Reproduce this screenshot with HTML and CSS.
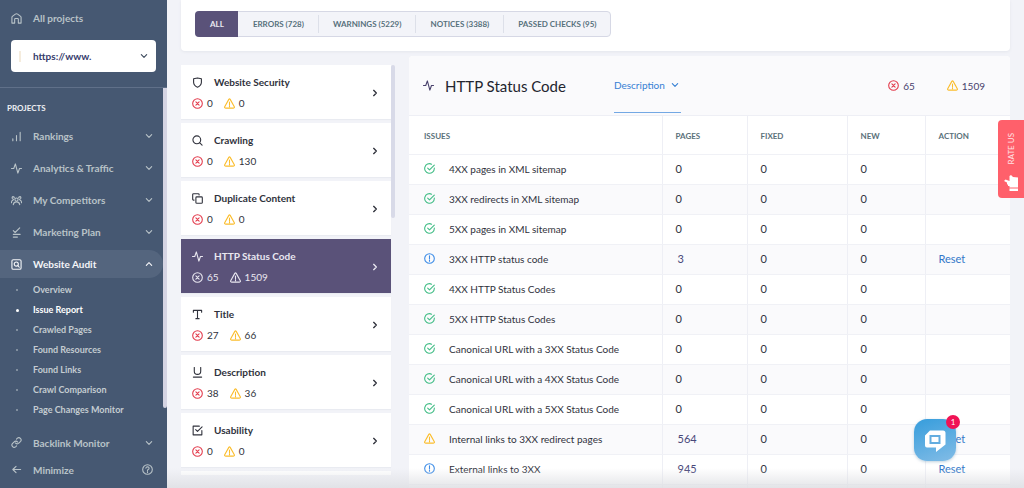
FILE: index.html
```html
<!DOCTYPE html>
<html lang="en">
<head>
<meta charset="utf-8">
<meta name="viewport" content="width=device-width, initial-scale=1">
<title>Website Audit – Issue Report</title>
<link rel="stylesheet" href="styles.css">
</head>
<body>
<svg class="sprite" aria-hidden="true">
  <symbol id="home" viewBox="0 0 24 24"><path d="M2 22V9.500Q2 8.500 3 7.500L9.500 2.500Q12 1 14.500 2.500L21 7.500Q22 8.500 22 9.500V22H16V13.500Q16 12 14.500 12H9.500Q8 12 8 13.500V22Z"/></symbol>
  <symbol id="bars" viewBox="0 0 24 24"><path d="M4 17V21M12 10V21M20 3V21"/></symbol>
  <symbol id="pulse" viewBox="0 0 24 24"><path d="M1 12H6L9.500 2L15 22L18.500 12H23"/></symbol>
  <symbol id="people" viewBox="0 0 24 24"><circle cx="12" cy="10" r="3.500"/><path d="M5 21Q6 15 12 15Q18 15 19 21M7.500 6.500Q7 3.500 4.500 3.500Q2 4 2.500 7Q3 9 5.500 9.500M1 17Q1 12 4.500 11.500M16.500 6.500Q17 3.500 19.500 3.500Q22 4 21.500 7Q21 9 18.500 9.500M23 17Q23 12 19.500 11.500"/></symbol>
  <symbol id="plan" viewBox="0 0 24 24"><path d="M5 8L9 12L19 2M5 16H20M5 22H14"/></symbol>
  <symbol id="audit" viewBox="0 0 24 24"><rect x="2" y="1.500" width="20" height="21" rx="3"/><circle cx="11.500" cy="11" r="4.500"/><path d="M15 14.500L18 18"/></symbol>
  <symbol id="link" viewBox="0 0 24 24"><path d="M9.500 13a5 5 0 0 0 7.500.500l4-4a5 5 0 0 0-7-7l-2 2M14.500 11a5 5 0 0 0-7.500-.500l-4 4a5 5 0 0 0 7 7l2-2"/></symbol>
  <symbol id="arrow" viewBox="0 0 24 24"><path d="M21 12H4M11 5L4 12L11 19"/></symbol>
  <symbol id="help" viewBox="0 0 24 24"><circle cx="12" cy="12" r="10.500"/><path d="M8.500 9Q9 6 12 6Q15.500 6.200 15.500 9Q15.500 11.500 12 13V14.500M12 17V18.500"/></symbol>
  <symbol id="down" viewBox="0 0 24 24"><path d="M4 8L12 16L20 8"/></symbol>
  <symbol id="up" viewBox="0 0 24 24"><path d="M4 16L12 8L20 16"/></symbol>
  <symbol id="right" viewBox="0 0 24 24"><path d="M8 4L16 12L8 20"/></symbol>
  <symbol id="shield" viewBox="0 0 24 24"><path d="M12 2L20.500 4V12Q20 19 12 22.500Q4 19 3.500 12V4Z"/></symbol>
  <symbol id="search" viewBox="0 0 24 24"><circle cx="10.500" cy="10.500" r="8.500"/><path d="M17 17L22 22"/></symbol>
  <symbol id="copy" viewBox="0 0 24 24"><rect x="8.500" y="8.500" width="14" height="14" rx="2"/><path d="M4.500 15.500H3.500Q1.500 15.500 1.500 13.500V3.500Q1.500 1.500 3.500 1.500H13.500Q15.500 1.500 15.500 3.500V4.500"/></symbol>
  <symbol id="type" viewBox="0 0 24 24"><path d="M3 7V3H21V7M12 3V21M8.500 21H15.500"/></symbol>
  <symbol id="under" viewBox="0 0 24 24"><path d="M5 1V9Q5 16 12 16Q19 16 19 9V1M3 22H21"/></symbol>
  <symbol id="check" viewBox="0 0 24 24"><path d="M8 10L12 14L22 4M21.500 12V21.500H2.500V2.500H16"/></symbol>
  <symbol id="error" viewBox="0 0 24 24"><circle cx="12" cy="12" r="10.500"/><path d="M8.500 8.500L15.500 15.500M15.500 8.500L8.500 15.500"/></symbol>
  <symbol id="warn" viewBox="0 0 24 24"><path d="M10.500 3Q12 1 13.500 3L22.500 19Q23.500 21.500 21 22H3Q.500 21.500 1.500 19ZM12 9V14.500M12 17V19"/></symbol>
  <symbol id="passed" viewBox="0 0 24 24"><path d="M22.500 11V12A10.500 10.500 0 1 1 16.500 2.500M8 11L12 15L22.500 4.500"/></symbol>
  <symbol id="info" viewBox="0 0 24 24"><circle cx="12" cy="12" r="10.500"/><path d="M12 6V13M12 16V18"/></symbol>
</svg>

<aside class="sidebar">
  <div class="sidebar-top">
    <a class="nav-item" href="#"><svg class="icon"><use href="#home"/></svg><span>All projects</span></a>
    <div class="project">
      <span class="favicon"></span>
      <select class="project-select" aria-label="Project"><option>https://www.</option></select>
      <svg class="chev"><use href="#down"/></svg>
    </div>
  </div>
  <nav class="nav" aria-label="Projects">
    <h2 class="nav-heading">PROJECTS</h2>
    <a class="nav-item" href="#"><svg class="icon"><use href="#bars"/></svg><span>Rankings</span><svg class="chev"><use href="#down"/></svg></a>
    <a class="nav-item" href="#"><svg class="icon"><use href="#pulse"/></svg><span>Analytics &amp; Traffic</span><svg class="chev"><use href="#down"/></svg></a>
    <a class="nav-item" href="#"><svg class="icon"><use href="#people"/></svg><span>My Competitors</span><svg class="chev"><use href="#down"/></svg></a>
    <a class="nav-item" href="#"><svg class="icon"><use href="#plan"/></svg><span>Marketing Plan</span><svg class="chev"><use href="#down"/></svg></a>
    <a class="nav-item nav-active" href="#"><svg class="icon"><use href="#audit"/></svg><span>Website Audit</span><svg class="chev"><use href="#up"/></svg></a>
    <ul class="subnav">
      <li><a href="#">Overview</a></li>
      <li class="current"><a href="#" aria-current="page">Issue Report</a></li>
      <li><a href="#">Crawled Pages</a></li>
      <li><a href="#">Found Resources</a></li>
      <li><a href="#">Found Links</a></li>
      <li><a href="#">Crawl Comparison</a></li>
      <li><a href="#">Page Changes Monitor</a></li>
    </ul>
    <span class="nav-scroll"></span>
  </nav>
  <div class="sidebar-bottom">
    <a class="nav-item" href="#"><svg class="icon"><use href="#link"/></svg><span>Backlink Monitor</span><svg class="chev"><use href="#down"/></svg></a>
    <button class="nav-item minimize" type="button"><svg class="icon"><use href="#arrow"/></svg><span>Minimize</span><svg class="icon"><use href="#help"/></svg></button>
  </div>
</aside>

<main class="main">
  <section class="filters">
    <div class="tabs">
      <button class="tab tab-on" type="button">ALL</button>
      <button class="tab" type="button">ERRORS (728)</button>
      <button class="tab" type="button">WARNINGS (5229)</button>
      <button class="tab" type="button">NOTICES (3388)</button>
      <button class="tab" type="button">PASSED CHECKS (95)</button>
    </div>
  </section>

  <div class="columns">
    <div class="categories">
      <div class="cards">
        <button class="card" type="button"><svg class="icon"><use href="#shield"/></svg><span class="card-title">Website Security</span><span class="counts"><svg class="icon red"><use href="#error"/></svg><span>0</span><svg class="icon amber"><use href="#warn"/></svg><span>0</span></span><svg class="go"><use href="#right"/></svg></button>
        <button class="card" type="button"><svg class="icon"><use href="#search"/></svg><span class="card-title">Crawling</span><span class="counts"><svg class="icon red"><use href="#error"/></svg><span>0</span><svg class="icon amber"><use href="#warn"/></svg><span>130</span></span><svg class="go"><use href="#right"/></svg></button>
        <button class="card" type="button"><svg class="icon"><use href="#copy"/></svg><span class="card-title">Duplicate Content</span><span class="counts"><svg class="icon red"><use href="#error"/></svg><span>0</span><svg class="icon amber"><use href="#warn"/></svg><span>0</span></span><svg class="go"><use href="#right"/></svg></button>
        <button class="card card-on" type="button"><svg class="icon"><use href="#pulse"/></svg><span class="card-title">HTTP Status Code</span><span class="counts"><svg class="icon"><use href="#error"/></svg><span>65</span><svg class="icon"><use href="#warn"/></svg><span>1509</span></span><svg class="go"><use href="#right"/></svg></button>
        <button class="card" type="button"><svg class="icon"><use href="#type"/></svg><span class="card-title">Title</span><span class="counts"><svg class="icon red"><use href="#error"/></svg><span>27</span><svg class="icon amber"><use href="#warn"/></svg><span>66</span></span><svg class="go"><use href="#right"/></svg></button>
        <button class="card" type="button"><svg class="icon"><use href="#under"/></svg><span class="card-title">Description</span><span class="counts"><svg class="icon red"><use href="#error"/></svg><span>38</span><svg class="icon amber"><use href="#warn"/></svg><span>36</span></span><svg class="go"><use href="#right"/></svg></button>
        <button class="card" type="button"><svg class="icon"><use href="#check"/></svg><span class="card-title">Usability</span><span class="counts"><svg class="icon red"><use href="#error"/></svg><span>0</span><svg class="icon amber"><use href="#warn"/></svg><span>0</span></span><svg class="go"><use href="#right"/></svg></button>
        <div class="card"></div>
      </div>
      <span class="cards-scroll"></span>
    </div>

    <section class="report">
      <header class="report-head">
        <svg class="icon"><use href="#pulse"/></svg>
        <h1>HTTP Status Code</h1>
        <button class="describe" type="button">Description <svg class="chev"><use href="#down"/></svg></button>
        <div class="totals">
          <span><svg class="icon red"><use href="#error"/></svg>65</span>
          <span><svg class="icon amber"><use href="#warn"/></svg>1509</span>
        </div>
      </header>
      <table class="issues">
        <colgroup><col><col class="c-pages"><col class="c-fixed"><col class="c-new"><col class="c-action"></colgroup>
        <thead><tr><th scope="col">ISSUES</th><th scope="col">PAGES</th><th scope="col">FIXED</th><th scope="col">NEW</th><th scope="col">ACTION</th></tr></thead>
        <tbody>
          <tr><td><svg class="icon green"><use href="#passed"/></svg>4XX pages in XML sitemap</td><td>0</td><td>0</td><td>0</td><td></td></tr>
          <tr><td><svg class="icon green"><use href="#passed"/></svg>3XX redirects in XML sitemap</td><td>0</td><td>0</td><td>0</td><td></td></tr>
          <tr><td><svg class="icon green"><use href="#passed"/></svg>5XX pages in XML sitemap</td><td>0</td><td>0</td><td>0</td><td></td></tr>
          <tr><td><svg class="icon blue"><use href="#info"/></svg>3XX HTTP status code</td><td><a class="pages" href="#">3</a></td><td>0</td><td>0</td><td><a class="reset" href="#">Reset</a></td></tr>
          <tr><td><svg class="icon green"><use href="#passed"/></svg>4XX HTTP Status Codes</td><td>0</td><td>0</td><td>0</td><td></td></tr>
          <tr><td><svg class="icon green"><use href="#passed"/></svg>5XX HTTP Status Codes</td><td>0</td><td>0</td><td>0</td><td></td></tr>
          <tr><td><svg class="icon green"><use href="#passed"/></svg>Canonical URL with a 3XX Status Code</td><td>0</td><td>0</td><td>0</td><td></td></tr>
          <tr><td><svg class="icon green"><use href="#passed"/></svg>Canonical URL with a 4XX Status Code</td><td>0</td><td>0</td><td>0</td><td></td></tr>
          <tr><td><svg class="icon green"><use href="#passed"/></svg>Canonical URL with a 5XX Status Code</td><td>0</td><td>0</td><td>0</td><td></td></tr>
          <tr><td><svg class="icon amber"><use href="#warn"/></svg>Internal links to 3XX redirect pages</td><td><a class="pages" href="#">564</a></td><td>0</td><td>0</td><td><a class="reset" href="#">Reset</a></td></tr>
          <tr><td><svg class="icon blue"><use href="#info"/></svg>External links to 3XX</td><td><a class="pages" href="#">945</a></td><td>0</td><td>0</td><td><a class="reset" href="#">Reset</a></td></tr>
          <tr><td></td><td></td><td></td><td></td><td></td></tr>
        </tbody>
      </table>
    </section>
  </div>
  <div class="fade"></div>
</main>

<button class="rate" type="button">
  <span>RATE US</span>
  <svg viewBox="0 0 28 32"><path d="M0 12L3 9L11 12V2L14 0L18 4L28 5V25H11V22H8V19H6V15Z"/><path d="M11 27H28V32H11Z"/></svg>
</button>
<button class="chat" type="button" aria-label="Open chat, 1 new message">
  <svg viewBox="0 0 42 42"><path class="bubble" d="M16 11.500H29Q31.500 11.500 31.500 14V25.500L22 33V28.500H13Q11 28.500 11 26.500V16.500Z"/><path class="screen" d="M16.500 17H25.500V24H16.500Z"/></svg>
  <span class="badge">1</span>
</button>
</body>
</html>
```
FILE: styles.css
```css
* { box-sizing: border-box; }

body {
  display: flex;
  height: 100vh;
  margin: 0;
  overflow: hidden;
  background: #f2f3f8;
  color: #30323c;
  font: 10px/16px Lato, "Open Sans", sans-serif;
}

button, select { font: inherit; color: inherit; border: 0; padding: 0; margin: 0; background: none; text-align: left; cursor: pointer; }
a { color: inherit; text-decoration: none; }
svg { display: block; fill: none; stroke: currentColor; stroke-width: 2.4; stroke-linecap: round; stroke-linejoin: round; flex: none; }
.sprite { position: absolute; width: 0; height: 0; }
.icon { width: 11px; height: 11px; }
.chev { width: 8px; height: 8px; stroke-width: 3.4; }
.red { color: #e33c4d; }
.amber { color: #fbbd2c; }
.green { color: #42bd86; }
.blue { color: #3c8ce7; }

/* Sidebar */
.sidebar { width: 167px; flex: none; background: #465872; color: #b9c3c8; font-weight: 700; }
.sidebar-top { height: 88px; padding-top: 2px; border-bottom: 1px solid #607089; }
.nav-item { display: flex; align-items: center; gap: 11px; height: 32px; padding: 0 14px 0 11px; white-space: nowrap; }
.nav-item span { flex: 1; }
.project { display: flex; align-items: center; margin: 6px 11px 0; height: 32px; border-radius: 4px; background: #fff; padding: 0 8px; color: #363b6c; }
.favicon { width: 2px; height: 11px; margin-right: 12px; background: #f5ecdd; }
.project-select { flex: 1; min-width: 0; appearance: none; font-weight: 700; outline: none; }
.project .chev { color: #3d4a5d; }
.nav { position: relative; height: 341px; padding: 12px 4px 0 0; }
.nav .nav-item { padding-right: 10px; }
.nav-heading { margin: 0 0 4px 7px; font-size: 8px; line-height: 16px; font-weight: 700; color: #eef0f4; }
.nav .nav-active { height: 28px; margin: 2px 0; border-radius: 0 14px 14px 0; background: #54657e; color: #f5f6f9; }
.subnav { list-style: none; margin: 0; padding: 0; font-size: 9px; line-height: 20px; }
.subnav li { display: flex; align-items: center; color: #c4ccd1; }
.subnav li::before { content: ""; width: 2px; height: 2px; margin: 0 15px 0 16px; border-radius: 50%; background: #94a1ae; }
.subnav .current { color: #fff; }
.subnav .current::before { width: 3px; height: 3px; margin-right: 14px; background: #fff; }
.nav-scroll { position: absolute; top: 0; right: 0; width: 4px; height: 320px; background: #d5d4e3; border-radius: 0 0 2px 2px; }
.sidebar-bottom .nav-item { height: 27px; }
.minimize { width: 100%; font-weight: 700; }

/* Main area */
.main { position: relative; flex: 1; min-width: 0; display: flex; flex-direction: column; padding: 0 14px; }
.filters { padding: 11px 14px 14px; background: #fff; border-radius: 0 0 4px 4px; box-shadow: 0 1px 3px #e4e6ec; }
.tabs { display: inline-flex; height: 26px; vertical-align: top; align-items: center; border: 1px solid #d6d8e5; border-radius: 4px; background: #f3f4f9; color: #57717c; }
.tab { height: 18px; padding: 0 14px; font-size: 8px; line-height: 18px; font-weight: 700; white-space: nowrap; border-left: 1px solid #dde0e9; }
.tab-on { height: 26px; margin: -1px 0 -1px -1px; padding: 0 14px 0 15px; border: 0; border-radius: 4px 0 0 4px; background: #5a5279; color: #ebeaf1; }
.tab-on + .tab { border-left-color: transparent; }

.columns { flex: 1; min-height: 0; display: flex; gap: 14px; padding-top: 5px; }
.categories { display: flex; align-items: flex-start; width: 214px; margin: 9px 0 13px; overflow: hidden; }
.cards { flex: 1; display: grid; gap: 4px; }
.card {
  display: grid;
  grid-template: 16px 16px / 11px 1fr 8px;
  align-items: center;
  gap: 5px 11px;
  height: 54px;
  padding: 9px 12px 8px 11px;
  background: #fff;
  box-shadow: 0 1px 1px #e9ebf1;
}
.card-title { font-weight: 700; }
.counts { grid-area: 2 / 1 / 3 / 3; display: flex; align-items: center; }
.counts .icon { margin-right: 4px; }
.counts span + .icon { margin-left: 11px; }
.go { grid-area: 1 / 3 / 3 / 4; width: 8px; height: 8px; stroke-width: 4; }
.card-on { background: #5a5279; color: #e9e7f0; }
.cards-scroll { width: 4px; height: 153px; border-radius: 2px; background: #d8dae8; }

.report { flex: 1; min-width: 0; overflow: hidden; background: #fff; border-radius: 4px 4px 0 0; }
.report-head { display: flex; align-items: center; height: 60px; padding: 0 25px 0 14px; background: #fafafc; border-bottom: 1px solid #eeeff5; color: #48416c; }
.report-head h1 { margin: 0 48px 0 11px; font-size: 15px; line-height: 20px; font-weight: 400; color: #23252f; white-space: nowrap; }
.describe { display: flex; align-items: center; align-self: flex-end; gap: 6px; height: 56px; margin-bottom: 2px; padding-right: 2px; border-bottom: 1px solid #73a8e4; color: #3680d4; }
.totals { display: flex; gap: 32px; margin-left: auto; }
.totals span { display: flex; align-items: center; gap: 4px; }

.issues { width: 100%; table-layout: fixed; border-collapse: collapse; }
.c-pages { width: 85px; }
.c-fixed { width: 100px; }
.c-new { width: 78px; }
.c-action { width: 85px; }
.issues th, .issues td { height: 30px; padding: 0 13px; text-align: left; border-bottom: 1px solid #f0f1f6; white-space: nowrap; }
.issues th + th, .issues td + td { border-left: 1px solid #eeeff5; }
.issues td + td { font-size: 11px; }
.issues th { height: 38px; padding-top: 2px; font-size: 8px; color: #5a717a; }
.issues th:first-child, .issues td:first-child { padding-left: 15px; }
.issues tr:nth-child(even) td { background: #fafafc; }
.issues td .icon { display: inline-block; margin-right: 14px; vertical-align: -1px; }
.pages { margin-left: 2px; color: #48487a; }
.reset { color: #3377c9; }

/* Overlays */
.fade { position: absolute; inset: auto 0 0; height: 20px; background: linear-gradient(#e0e2e600, #dddee2cc); pointer-events: none; }
.rate { position: absolute; top: 120px; right: 0; display: flex; flex-direction: column; align-items: center; justify-content: space-between; width: 26px; height: 78px; padding: 13px 0 7px; border-radius: 4px 0 0 4px; background: #ff606b; color: #ffe3e5; }
.rate span { writing-mode: vertical-rl; rotate: 180deg; font-size: 8px; line-height: 12px; }
.rate svg { width: 14px; height: 16px; fill: #fff; stroke: none; }
.chat { position: absolute; right: 68px; bottom: 27px; width: 42px; height: 42px; border-radius: 13px; background: linear-gradient(160deg, #369ddc, #82bce6); box-shadow: 0 1px 3px #7fa3be80; }
.bubble { fill: #fff; stroke: none; }
.screen { stroke: #64ade0; stroke-width: 2; stroke-linejoin: miter; }
.badge { position: absolute; top: -4px; right: -4px; width: 14px; height: 14px; border-radius: 50%; background: #f01355; color: #fff; font-size: 8px; line-height: 14px; text-align: center; }
```
